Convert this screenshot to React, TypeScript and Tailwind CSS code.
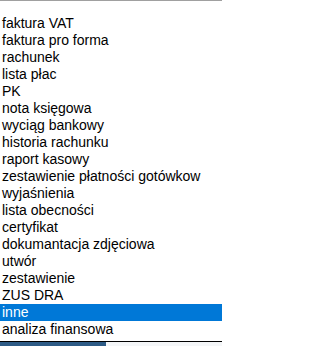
import React from "react";

const items = [
  "faktura VAT",
  "faktura pro forma",
  "rachunek",
  "lista płac",
  "PK",
  "nota księgowa",
  "wyciąg bankowy",
  "historia rachunku",
  "raport kasowy",
  "zestawienie płatności gotówkow",
  "wyjaśnienia",
  "lista obecności",
  "certyfikat",
  "dokumantacja zdjęciowa",
  "utwór",
  "zestawienie",
  "ZUS DRA",
  "inne",
  "analiza finansowa",
];

export default function App() {
  return (
    <div
      className="w-[222px] h-[346px] bg-white flex flex-col overflow-hidden"
      style={{ fontFamily: '"Liberation Sans", Arial, sans-serif' }}
    >
      <div className="h-[1px] shrink-0 bg-[#a0a0a0]" />
      <div className="h-[14px] shrink-0" />
      <ul className="flex flex-col shrink-0">
        {items.map((t) => (
          <li
            key={t}
            className={
              t === "inne"
                ? "h-[17px] leading-[17px] text-[14px] pl-[2px] whitespace-nowrap bg-[#0078d7] text-white"
                : "h-[17px] leading-[17px] text-[14px] pl-[2px] whitespace-nowrap text-black"
            }
          >
            {t}
          </li>
        ))}
      </ul>
      <div className="h-[3px] shrink-0" />
      <div className="h-[1px] shrink-0 bg-black" />
      <div className="flex h-[4px] shrink-0">
        <div className="w-[106px] bg-[#2e5b86]" />
        <div className="flex-1 bg-[#f4f6f8]" />
      </div>
    </div>
  );
}
